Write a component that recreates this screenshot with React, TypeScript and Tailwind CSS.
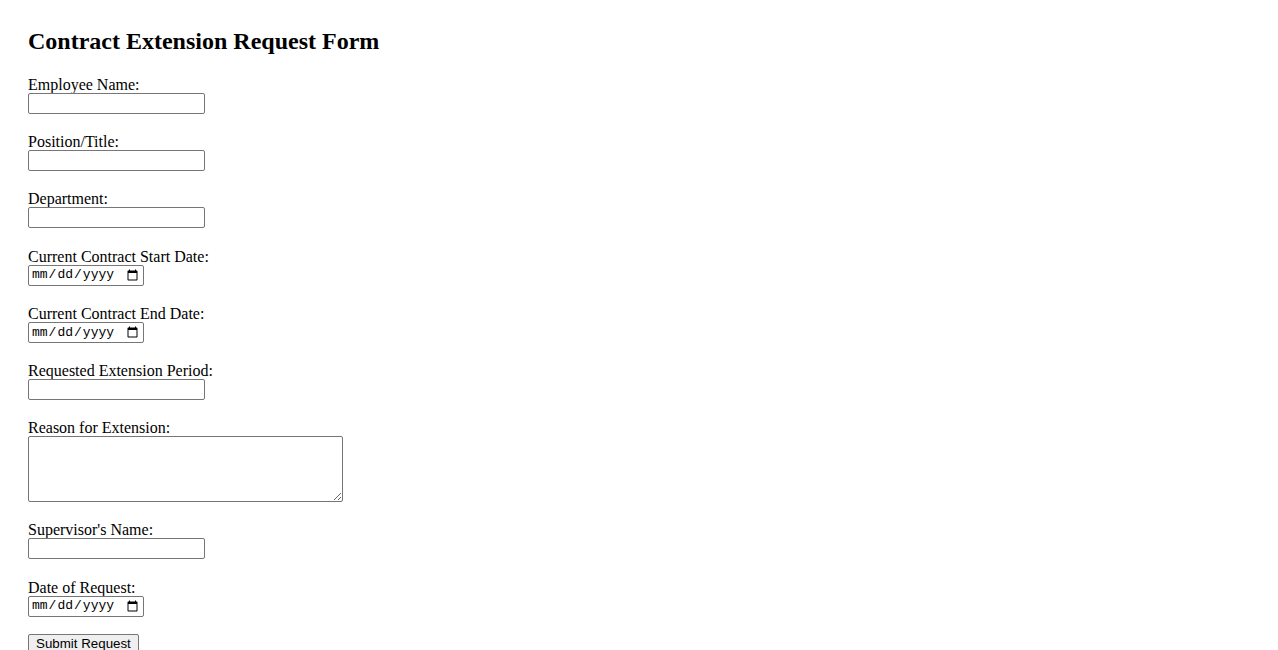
import * as React from "react";

const textFields = [
  { id: "employeeName", label: "Employee Name:", type: "text" },
  { id: "position", label: "Position/Title:", type: "text" },
  { id: "department", label: "Department:", type: "text" },
  { id: "startDate", label: "Current Contract Start Date:", type: "date" },
  { id: "endDate", label: "Current Contract End Date:", type: "date" },
  { id: "extensionPeriod", label: "Requested Extension Period:", type: "text" },
];

const afterFields = [
  { id: "supervisor", label: "Supervisor's Name:", type: "text" },
  { id: "requestDate", label: "Date of Request:", type: "date" },
];

function Field({ id, label, type }: { id: string; label: string; type: string }) {
  return (
    <div className="mb-[19.2px] flex flex-col items-start">
      <label htmlFor={id} className="leading-[18px]">
        {label}
      </label>
      {type === "date" ? (
        <input
          id={id}
          type="date"
          className="-mt-[1px] h-[21px] w-[116px] rounded-[2px] border border-[#767676] bg-white pl-[2px] pr-[2px] font-['Liberation_Mono',monospace] text-[13px] text-black"
        />
      ) : (
        <input
          id={id}
          type="text"
          className="-mt-[1px] h-[21px] w-[177px] rounded-[2px] border border-[#767676] bg-white px-[2px] font-['Liberation_Sans',Arial,sans-serif] text-[13.33px]"
        />
      )}
    </div>
  );
}

export default function App() {
  return (
    <div className="min-h-[650px] bg-white px-[28px] pt-[28px] font-['Liberation_Serif','Times_New_Roman',serif] text-[16px] text-black">
      <h2 className="mb-[22px] text-[24px] font-bold leading-[26px]">
        Contract Extension Request Form
      </h2>
      <form onSubmit={(e) => e.preventDefault()}>
        {textFields.map((f) => (
          <Field key={f.id} {...f} />
        ))}
        <div className="mb-[19.2px] flex flex-col items-start">
          <label htmlFor="reason" className="leading-[18px]">
            Reason for Extension:
          </label>
          <textarea
            id="reason"
            className="-mt-[1px] h-[66px] w-[315px] rounded-[2px] border border-[#767676] bg-white p-[2px] font-['Liberation_Mono',monospace] text-[13px]"
          />
        </div>
        {afterFields.map((f) => (
          <Field key={f.id} {...f} />
        ))}
        <button
          type="submit"
          className="-mt-[2px] block h-[21px] rounded-[2px] border border-[#767676] bg-[#efefef] px-[7px] font-['Liberation_Sans',Arial,sans-serif] text-[13.33px] leading-[16px]"
        >
          Submit Request
        </button>
      </form>
    </div>
  );
}
